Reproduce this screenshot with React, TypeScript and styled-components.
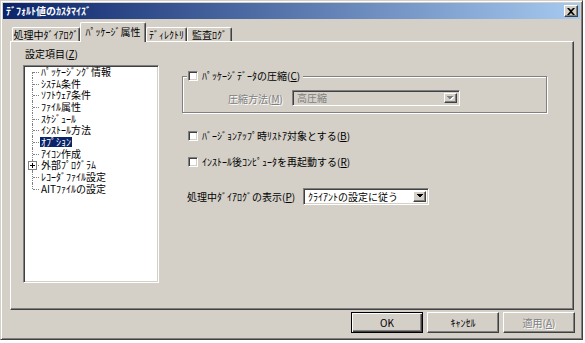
import styled, { createGlobalStyle } from "styled-components";

const GlobalStyle = createGlobalStyle`
  html, body {
    margin: 0;
    padding: 0;
    background: #ffffff;
  }
  body {
    font-family: "Noto Sans CJK JP", "Noto Sans", sans-serif;
    font-size: 10px;
    color: #000000;
  }
`;

const treeItems = [
  "ﾊﾟｯｹｰｼﾞﾝｸﾞ情報",
  "ｼｽﾃﾑ条件",
  "ｿﾌﾄｳｪｱ条件",
  "ﾌｧｲﾙ属性",
  "ｽｹｼﾞｭｰﾙ",
  "ｲﾝｽﾄｰﾙ方法",
  "ｵﾌﾟｼｮﾝ",
  "ｱｲｺﾝ作成",
  "外部ﾌﾟﾛｸﾞﾗﾑ",
  "ﾚｺｰﾀﾞﾌｧｲﾙ設定",
  "AITﾌｧｲﾙの設定",
];
const selectedItem = 6;
const expandableItem = 8;

const tabs = [
  { label: "処理中ﾀﾞｲｱﾛｸﾞ", width: 68 },
  { label: "ﾊﾟｯｹｰｼﾞ属性", width: 66, active: true },
  { label: "ﾃﾞｨﾚｸﾄﾘ", width: 41 },
  { label: "監査ﾛｸﾞ", width: 45 },
];

export default function App() {
  return (
    <>
      <GlobalStyle />
      <Window>
        <TitleBar>
          <Title>ﾃﾞﾌｫﾙﾄ値のｶｽﾀﾏｲｽﾞ</Title>
          <CloseButton>
            <svg width="8" height="7" viewBox="0 0 8 7">
              <path d="M0 0h2l2 2 2-2h2L5 3.5 8 7H6L4 5 2 7H0l3-3.5z" fill="#000" />
            </svg>
          </CloseButton>
        </TitleBar>

        <TabStrip>
          {tabs.map((t) => (
            <Tab key={t.label} $w={t.width} $active={t.active}>
              {t.label}
            </Tab>
          ))}
        </TabStrip>

        <Panel>
          <LeftColumn>
            <FieldLabel>
              設定項目(<u>Z</u>)
            </FieldLabel>
            <TreeBox>
              {treeItems.map((item, i) => (
                <TreeRow key={item}>
                  <Connector
                    $pos={i === 0 ? "first" : i === treeItems.length - 1 ? "last" : "mid"}
                  >
                    {i === expandableItem && (
                      <Expander>
                        <svg width="5" height="5" viewBox="0 0 5 5" shapeRendering="crispEdges">
                          <rect x="0" y="2" width="5" height="1" fill="#000" />
                          <rect x="2" y="0" width="1" height="5" fill="#000" />
                        </svg>
                      </Expander>
                    )}
                  </Connector>
                  <TreeLabel $selected={i === selectedItem}>{item}</TreeLabel>
                </TreeRow>
              ))}
            </TreeBox>
          </LeftColumn>

          <RightColumn>
            <GroupBox>
              <GroupLegend>
                <CheckBox />
                <span>
                  ﾊﾟｯｹｰｼﾞﾃﾞｰﾀの圧縮(<u>C</u>)
                </span>
              </GroupLegend>
              <GroupRow>
                <DisabledText>
                  圧縮方法(<u>M</u>)
                </DisabledText>
                <Combo $w={168} $h={16} $disabled>
                  <ComboText $disabled>高圧縮</ComboText>
                  <DropButton>
                    <Arrow disabled />
                  </DropButton>
                </Combo>
              </GroupRow>
            </GroupBox>

            <CheckRow $top={17}>
              <CheckBox />
              <span>
                ﾊﾞｰｼﾞｮﾝｱｯﾌﾟ時ﾘｽﾄｱ対象とする(<u>B</u>)
              </span>
            </CheckRow>
            <CheckRow $top={14}>
              <CheckBox />
              <span>
                ｲﾝｽﾄｰﾙ後ｺﾝﾋﾟｭｰﾀを再起動する(<u>R</u>)
              </span>
            </CheckRow>

            <ComboRow>
              <ComboLabel>
                処理中ﾀﾞｲｱﾛｸﾞの表示(<u>P</u>)
              </ComboLabel>
              <Combo $w={126} $h={17}>
                <ComboText>ｸﾗｲｱﾝﾄの設定に従う</ComboText>
                <DropButton>
                  <Arrow />
                </DropButton>
              </Combo>
            </ComboRow>
          </RightColumn>
        </Panel>

        <ButtonBar>
          <Button $default>OK</Button>
          <Button>ｷｬﾝｾﾙ</Button>
          <Button disabled>
            適用(<u>A</u>)
          </Button>
        </ButtonBar>
      </Window>
    </>
  );
}

function Arrow({ disabled }: { disabled?: boolean }) {
  return (
    <svg width="8" height="5" viewBox="0 0 8 5" shapeRendering="crispEdges">
      {disabled && <path d="M1 1h7L4.5 4.5z" fill="#ffffff" />}
      <path d="M0 0h7L3.5 3.5z" fill={disabled ? "#808080" : "#000000"} />
    </svg>
  );
}

const raised = `
  border: 1px solid;
  border-color: #ffffff #404040 #404040 #ffffff;
  box-shadow: inset -1px -1px #808080;
`;

const sunken = `
  border: 1px solid;
  border-color: #808080 #ffffff #ffffff #808080;
  box-shadow: inset 1px 1px #404040, inset -1px -1px #d4d0c8;
`;

const Window = styled.div`
  width: 583px;
  height: 340px;
  box-sizing: border-box;
  padding: 2px;
  background: #d4d0c8;
  border: 1px solid;
  border-color: #d4d0c8 #404040 #404040 #d4d0c8;
  box-shadow: inset 1px 1px #ffffff, inset -1px -1px #808080;
  display: flex;
  flex-direction: column;
`;

const TitleBar = styled.div`
  height: 16px;
  flex: none;
  display: flex;
  align-items: center;
  justify-content: space-between;
  padding: 0 2px 0 3px;
  background: linear-gradient(to right, #0a246a, #a6caf0);
`;

const Title = styled.span`
  color: #ffffff;
  font-weight: bold;
  font-size: 10px;
  line-height: 12px;
  white-space: nowrap;
`;

const CloseButton = styled.div`
  width: 14px;
  height: 12px;
  box-sizing: border-box;
  background: #d4d0c8;
  ${raised}
  display: flex;
  align-items: center;
  justify-content: center;
`;

const TabStrip = styled.div`
  display: flex;
  align-items: flex-end;
  height: 20px;
  margin: 3px 0 -1px 9px;
  position: relative;
  z-index: 1;
`;

const Tab = styled.div<{ $w: number; $active?: boolean }>`
  width: ${(p) => p.$w}px;
  height: ${(p) => (p.$active ? 20 : 14)}px;
  margin-bottom: ${(p) => (p.$active ? 0 : 1)}px;
  box-sizing: border-box;
  background: #d4d0c8;
  border-top: 1px solid #ffffff;
  border-left: 1px solid #ffffff;
  border-right: 1px solid #404040;
  box-shadow: inset -1px 0 #808080;
  border-radius: 2px 2px 0 0;
  display: flex;
  align-items: center;
  justify-content: center;
  padding-bottom: ${(p) => (p.$active ? 2 : 0)}px;
  white-space: nowrap;
  font-size: 10px;
  line-height: 12px;
`;

const Panel = styled.div`
  height: 269px;
  margin: 0 6px 0 7px;
  box-sizing: border-box;
  border: 1px solid;
  border-color: #ffffff #404040 #404040 #ffffff;
  box-shadow: inset -1px -1px #808080;
  display: flex;
  gap: 23px;
  padding: 6px 0 0 12px;
`;

const LeftColumn = styled.div`
  width: 136px;
  display: flex;
  flex-direction: column;
`;

const FieldLabel = styled.div`
  height: 12px;
  line-height: 12px;
  margin: 0 0 5px 2px;
  white-space: nowrap;
`;

const TreeBox = styled.div`
  height: 218px;
  box-sizing: border-box;
  background: #ffffff;
  ${sunken}
  padding: 0 0 0 2px;
`;

const TreeRow = styled.div`
  height: 11.7px;
  display: flex;
  align-items: center;
`;

const Connector = styled.span<{ $pos: "first" | "mid" | "last" }>`
  position: relative;
  flex: none;
  width: 14px;
  height: 100%;
  &::before {
    content: "";
    position: absolute;
    left: 6px;
    top: ${(p) => (p.$pos === "first" ? "50%" : "0")};
    bottom: ${(p) => (p.$pos === "last" ? "50%" : "0")};
    border-left: 1px dotted #808080;
  }
  &::after {
    content: "";
    position: absolute;
    left: 7px;
    width: 6px;
    top: 50%;
    border-top: 1px dotted #808080;
  }
`;

const Expander = styled.span`
  position: absolute;
  z-index: 1;
  left: 2px;
  top: 50%;
  margin-top: -4px;
  width: 9px;
  height: 9px;
  box-sizing: border-box;
  border: 1px solid #808080;
  background: #ffffff;
  display: flex;
  align-items: center;
  justify-content: center;
`;

const TreeLabel = styled.span<{ $selected?: boolean }>`
  display: inline-flex;
  align-items: center;
  padding: 0 1px;
  height: 10px;
  line-height: 10px;
  white-space: nowrap;
  color: ${(p) => (p.$selected ? "#ffffff" : "#000000")};
  background: ${(p) => (p.$selected ? "#0a246a" : "transparent")};
`;

const RightColumn = styled.div`
  display: flex;
  flex-direction: column;
`;

const GroupBox = styled.fieldset`
  width: 365px;
  box-sizing: border-box;
  margin: 22px 0 0;
  padding: 0 0 6px;
  min-width: 0;
  border: 1px solid #808080;
  box-shadow: 1px 1px 0 #ffffff, inset 1px 1px 0 #ffffff;
`;

const GroupLegend = styled.legend`
  margin-left: 4px;
  padding: 0 3px 0 1px;
  height: 12px;
  line-height: 12px;
  background: #d4d0c8;
  display: flex;
  align-items: center;
  gap: 4px;
  white-space: nowrap;
`;

const GroupRow = styled.div`
  display: flex;
  align-items: center;
  gap: 9px;
  margin: 8px 0 0 45px;
`;

const DisabledText = styled.span`
  color: #808080;
  text-shadow: 1px 1px 0 #ffffff;
  white-space: nowrap;
`;

const CheckBox = styled.span`
  flex: none;
  width: 10px;
  height: 10px;
  box-sizing: border-box;
  background: #ffffff;
  ${sunken}
`;

const CheckRow = styled.div<{ $top: number }>`
  display: flex;
  align-items: center;
  gap: 4px;
  height: 12px;
  line-height: 12px;
  margin-top: ${(p) => p.$top}px;
  padding-left: 6px;
  white-space: nowrap;
`;

const ComboRow = styled.div`
  display: flex;
  align-items: center;
  margin-top: 20px;
  padding-left: 5px;
`;

const ComboLabel = styled.span`
  width: 116px;
  white-space: nowrap;
`;

const Combo = styled.div<{ $w: number; $h: number; $disabled?: boolean }>`
  width: ${(p) => p.$w}px;
  height: ${(p) => p.$h}px;
  box-sizing: border-box;
  display: flex;
  align-items: stretch;
  padding: 2px;
  background: ${(p) => (p.$disabled ? "#d4d0c8" : "#ffffff")};
  ${sunken}
`;

const ComboText = styled.span<{ $disabled?: boolean }>`
  flex: 1;
  display: flex;
  align-items: center;
  padding-left: 2px;
  line-height: 10px;
  white-space: nowrap;
  color: ${(p) => (p.$disabled ? "#808080" : "#000000")};
`;

const DropButton = styled.span`
  width: 13px;
  box-sizing: border-box;
  background: #d4d0c8;
  ${raised}
  display: flex;
  align-items: center;
  justify-content: center;
`;

const ButtonBar = styled.div`
  display: flex;
  justify-content: flex-end;
  gap: 4px;
  margin-top: 2px;
  padding-right: 5px;
`;

const Button = styled.button<{ $default?: boolean }>`
  width: 72px;
  height: 21px;
  box-sizing: border-box;
  padding: 0;
  font-family: "Noto Sans CJK JP", "Noto Sans", sans-serif;
  font-size: 10px;
  line-height: 12px;
  color: #000000;
  background: #d4d0c8;
  ${(p) =>
    p.$default
      ? `
    border: 1px solid #000000;
    box-shadow: inset 1px 1px #ffffff, inset -1px -1px #404040, inset -2px -2px #808080;
  `
      : raised}
  &:disabled {
    color: #808080;
    text-shadow: 1px 1px 0 #ffffff;
  }
`;
